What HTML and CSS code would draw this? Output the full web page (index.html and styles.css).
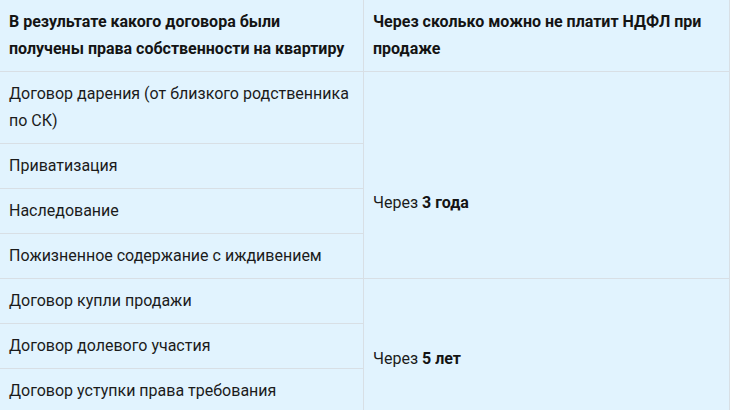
FILE: index.html
```html
<!DOCTYPE html>
<html lang="ru">
<head>
<meta charset="utf-8">
<link rel="stylesheet" href="styles.css">
</head>
<body>
<table class="tax-table">
  <colgroup><col class="col-a"><col class="col-b"></colgroup>
  <thead>
    <tr>
      <th>В результате какого договора были получены права собственности на квартиру</th>
      <th>Через сколько можно не платит НДФЛ при продаже</th>
    </tr>
  </thead>
  <tbody>
    <tr>
      <td>Договор дарения (от близкого родственника по СК)</td>
      <td rowspan="4" class="term term-3">Через <b>3 года</b></td>
    </tr>
    <tr><td>Приватизация</td></tr>
    <tr><td>Наследование</td></tr>
    <tr><td>Пожизненное содержание с иждивением</td></tr>
    <tr>
      <td>Договор купли продажи</td>
      <td rowspan="3" class="term term-5">Через <b>5 лет</b></td>
    </tr>
    <tr><td>Договор долевого участия</td></tr>
    <tr><td>Договор уступки права требования</td></tr>
  </tbody>
</table>
</body>
</html>
```

FILE: styles.css
```css
html, body {
  margin: 0;
  padding: 0;
  background: #ffffff;
}
body {
  font-family: Roboto, "Noto Sans", Arial, sans-serif;
  font-size: 16px;
  color: #1b1b1b;
  overflow: hidden;
}
.tax-table {
  border-collapse: collapse;
  table-layout: fixed;
  width: 730px;
  margin: -1px 0 0 -1px;
  background: #e1f3fe;
}
.col-a { width: 364px; }
.col-b { width: 366px; }
.tax-table th,
.tax-table td {
  border: 1px solid #d8dfe5;
  padding: 8px 9px 9px 9px;
  line-height: 27px;
  text-align: left;
  vertical-align: top;
}
.tax-table th {
  font-weight: 700;
  color: #141414;
}
.tax-table td b {
  font-weight: 700;
  color: #141414;
}
.tax-table td.term-3 { padding-top: 117px; }
.tax-table td.term-5 { padding-top: 66px; }
```
